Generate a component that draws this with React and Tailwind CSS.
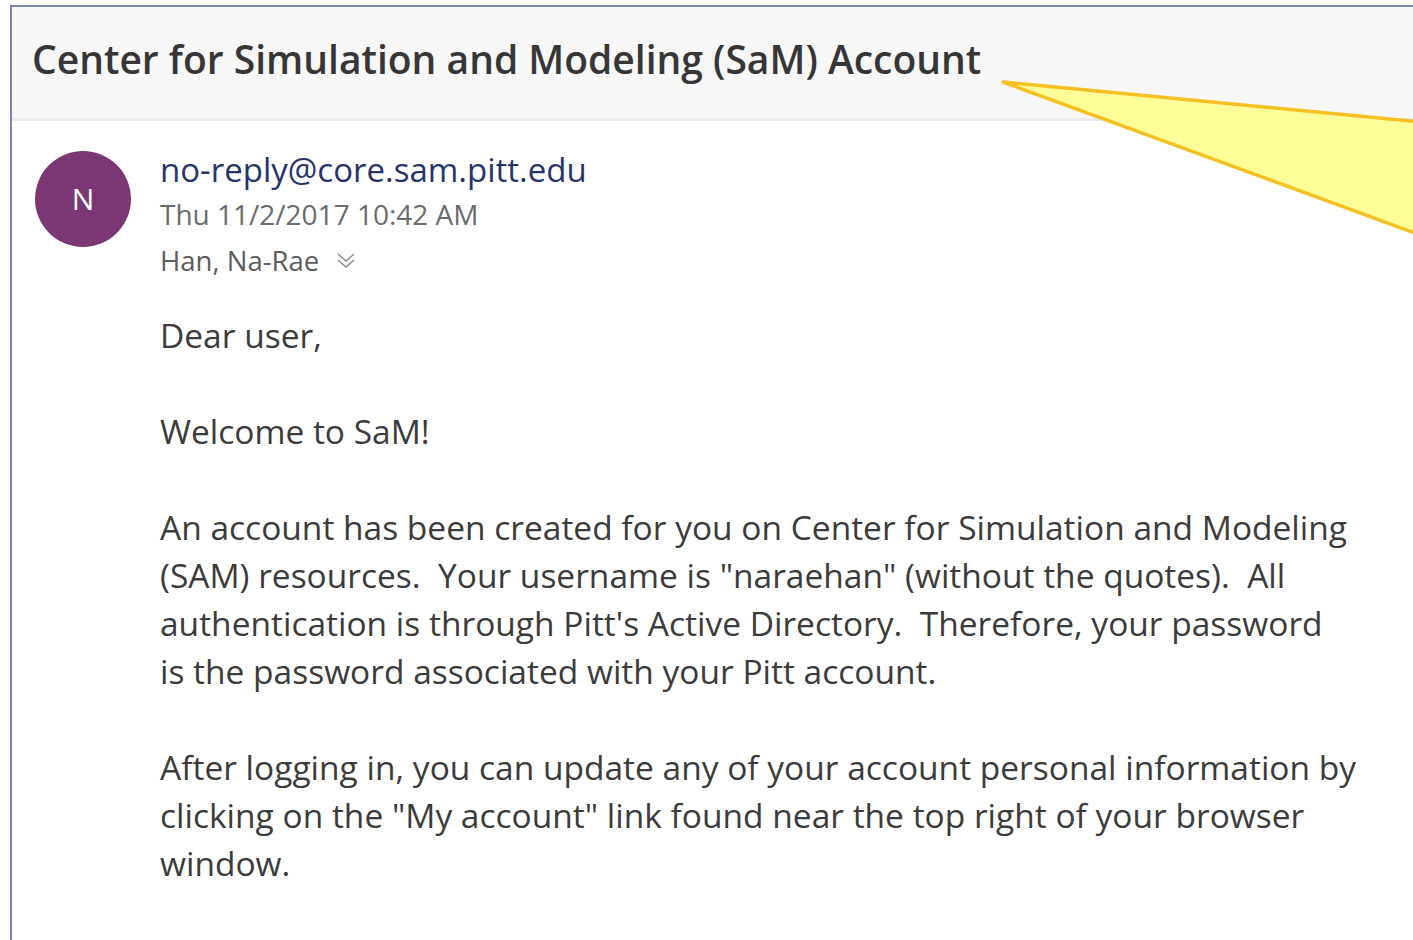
import React from 'react';

const font = { fontFamily: '"Open Sans", "Noto Sans", sans-serif' };

// Sender avatar with initial
function Avatar({ letter }) {
    return (
        <div className="w-[96px] h-[96px] rounded-full bg-[#7b3774] flex items-center justify-center shrink-0">
            <span className="text-white text-[30px] leading-none">{letter}</span>
        </div>
    );
}

function ChevronDouble() {
    return (
        <svg width="22" height="22" viewBox="0 0 22 22" fill="none" stroke="#8a8a8a" strokeWidth="1.4">
            <path d="M3 4l8 7 8-7" />
            <path d="M3 10l8 7 8-7" />
        </svg>
    );
}

// Yellow speech pointer coming in from the right edge
function Callout() {
    return (
        <svg className="absolute left-0 top-0 pointer-events-none" width="1413" height="940">
            <polygon
                points="1003,82 1420,122 1420,235"
                fill="#ffff99"
                stroke="#f6bf22"
                strokeWidth="3.5"
                strokeLinejoin="round"
            />
        </svg>
    );
}

export default function App() {
    const body = [
        ['Dear user,'],
        ['Welcome to SaM!'],
        [
            'An account has been created for you on Center for Simulation and Modeling',
            '(SAM) resources.\u00a0 Your username is "naraehan" (without the quotes).\u00a0 All',
            "authentication is through Pitt's Active Directory.\u00a0 Therefore, your password",
            'is the password associated with your Pitt account.',
        ],
        [
            'After logging in, you can update any of your account personal information by',
            'clicking on the "My account" link found near the top right of your browser',
            'window.',
        ],
    ];

    return (
        <div className="relative w-[1413px] h-[940px] overflow-hidden bg-white pt-[5px] pl-[10px]" style={font}>
            <div className="h-full border-t-2 border-l-2 border-[#7d86b4] flex flex-col">
                {/* subject bar */}
                <div className="h-[114px] bg-[#f7f7f7] border-b-[3px] border-[#ebebeb] flex items-center pl-[20px] pb-[6px] shrink-0">
                    <h1 className="text-[39px] font-semibold text-[#363636] whitespace-nowrap">
                        Center for Simulation and Modeling (SaM) Account
                    </h1>
                </div>

                {/* message */}
                <div className="flex pl-[23px] pt-[30px] gap-[29px]">
                    <Avatar letter="N" />
                    <div className="flex flex-col">
                        <div className="text-[33px] leading-[40px] text-[#27346a] whitespace-nowrap -mt-[1px]">
                            no-reply@core.sam.pitt.edu
                        </div>
                        <div className="text-[28px] leading-[40px] text-[#6b6b6b] whitespace-nowrap mt-[4px]">
                            Thu 11/2/2017 10:42 AM
                        </div>
                        <div className="flex items-center gap-[16px] text-[27.5px] leading-[40px] text-[#5c5c5c] mt-[7px]">
                            <span>Han, Na-Rae</span>
                            <ChevronDouble />
                        </div>

                        <div className="mt-[30px] flex flex-col gap-[48px] text-[33.5px] leading-[48px] text-[#3b3b3b]">
                            {body.map((para, i) => (
                                <div key={i}>
                                    {para.map((line, j) => (
                                        <div key={j} className="whitespace-nowrap">{line}</div>
                                    ))}
                                </div>
                            ))}
                        </div>
                    </div>
                </div>
            </div>
            <Callout />
        </div>
    );
}
